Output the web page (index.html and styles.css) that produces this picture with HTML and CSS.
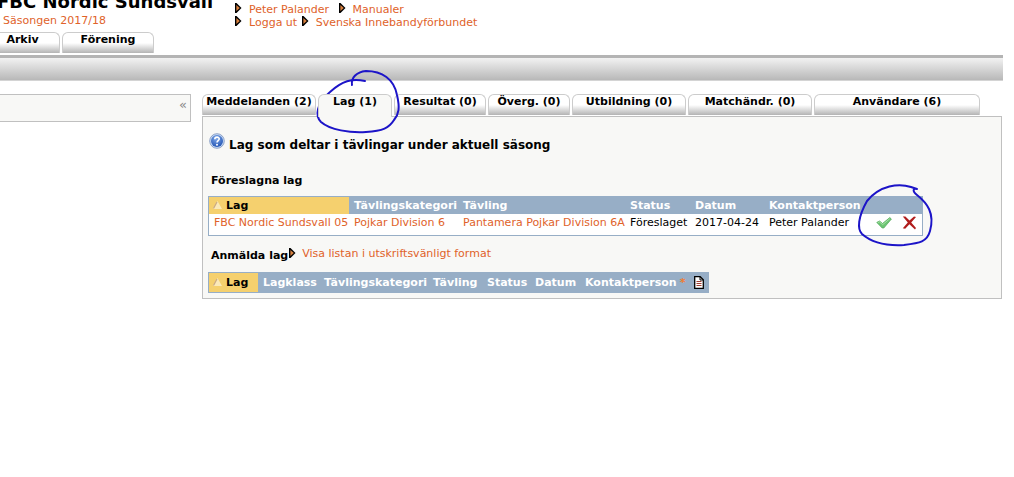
FILE: index.html
```html
<!DOCTYPE html>
<html lang="sv">
<head>
  <meta charset="UTF-8">
  <title>FBC Nordic Sundsvall</title>
  <link rel="stylesheet" href="styles.css">
</head>
<body>

  <svg class="symbols" width="0" height="0" aria-hidden="true">
    <symbol id="arrow" viewBox="0 0 7 10">
      <path d="M0 0 H1.5 L6.5 5 L1.5 10 H0 Z" fill="#000"/>
      <path d="M1.4 2 L4.8 5 L1.4 8 Z" fill="#d8803f"/>
    </symbol>
    <symbol id="sort" viewBox="0 0 9 8">
      <path d="M4.5 0 L9 8 H0 Z" fill="#fbe9b8"/>
      <path d="M4 1 L.5 7.5" stroke="#c9a886" stroke-width="1.2"/>
    </symbol>
  </svg>

  <header class="header">
    <div class="club">
      <h1>FBC Nordic Sundsvall</h1>
      <a href="#">Säsongen 2017/18</a>
    </div>
    <nav class="links">
      <div>
        <svg class="arrow"><use href="#arrow"/></svg><a href="#">Peter Palander</a>
        <svg class="arrow wide"><use href="#arrow"/></svg><a href="#">Manualer</a>
      </div>
      <div>
        <svg class="arrow"><use href="#arrow"/></svg><a href="#">Logga ut</a>
        <svg class="arrow"><use href="#arrow"/></svg><a href="#">Svenska Innebandyförbundet</a>
      </div>
    </nav>
  </header>

  <nav class="menu">
    <a class="tab tab-arkiv" href="#">Arkiv</a>
    <a class="tab tab-forening" href="#">Förening</a>
  </nav>
  <div class="bar"></div>

  <div class="page">
    <aside class="sidebar"><a href="#">«</a></aside>

    <main class="main">
      <nav class="tabs">
        <a class="tab tab-meddelanden" href="#">Meddelanden (2)</a>
        <a class="tab tab-lag active" href="#">Lag (1)</a>
        <a class="tab tab-resultat" href="#">Resultat (0)</a>
        <a class="tab tab-overg" href="#">Överg. (0)</a>
        <a class="tab tab-utbildning" href="#">Utbildning (0)</a>
        <a class="tab tab-match" href="#">Matchändr. (0)</a>
        <a class="tab tab-anvandare" href="#">Användare (6)</a>
      </nav>

      <section class="panel">
        <div class="heading">
          <svg class="help" viewBox="0 0 16 16">
            <defs>
              <radialGradient id="blue" cx=".45" cy=".3" r=".7">
                <stop offset="0" stop-color="#7fa9ea"/>
                <stop offset="1" stop-color="#2556b4"/>
              </radialGradient>
            </defs>
            <circle cx="8" cy="8" r="7.3" fill="#c9dcf5" stroke="#7890bd" stroke-width=".8"/>
            <circle cx="8" cy="8" r="6" fill="url(#blue)"/>
            <path d="M5.8 6.2 C5.8 3.4 10.3 3.5 10.2 6 C10.1 7.5 8 7.6 8 9.4" fill="none" stroke="#fff" stroke-width="1.6"/>
            <circle cx="8" cy="11.7" r="1" fill="#fff"/>
          </svg>
          <h2>Lag som deltar i tävlingar under aktuell säsong</h2>
        </div>

        <h3>Föreslagna lag</h3>
        <table class="list proposed">
          <colgroup>
            <col class="c-lag"><col class="c-kategori"><col class="c-tavling"><col class="c-status"><col class="c-datum"><col class="c-kontakt"><col class="c-action">
          </colgroup>
          <thead>
            <tr>
              <th class="sorted"><svg class="sort"><use href="#sort"/></svg>Lag</th>
              <th>Tävlingskategori</th>
              <th>Tävling</th>
              <th>Status</th>
              <th>Datum</th>
              <th>Kontaktperson</th>
              <th></th>
            </tr>
          </thead>
          <tbody>
            <tr>
              <td><a href="#">FBC Nordic Sundsvall 05</a></td>
              <td><a href="#">Pojkar Division 6</a></td>
              <td><a href="#">Pantamera Pojkar Division 6A</a></td>
              <td>Föreslaget</td>
              <td>2017-04-24</td>
              <td>Peter Palander</td>
              <td>
                <div class="actions">
                  <button type="button" aria-label="Godkänn">
                    <svg width="16" height="14" viewBox="0 0 16 14">
                      <path d="M.8 6.4 L3.5 5 L6.5 7.5 L13.8 1.6 L15.4 3 L7.8 12 H6.2 Z" fill="#6cc573" stroke="#58ad60" stroke-width=".8"/>
                      <path d="M2 6.5 L3.5 5.9 L6.7 8.6 L13.8 2.7" fill="none" stroke="#a8e2a6"/>
                    </svg>
                  </button>
                  <button type="button" aria-label="Ta bort">
                    <svg width="15" height="14" viewBox="0 0 15 14">
                      <path d="M.8 .6 H3.4 L7.5 4.6 L12 .4 L14 1 L9.2 6.4 L14 12 L13 13.5 L7.4 8.2 L3.2 12.8 L.8 12.2 L5.8 6.4 Z" fill="#b01c1c"/>
                    </svg>
                  </button>
                </div>
              </td>
            </tr>
          </tbody>
        </table>

        <div class="registered-head">
          <h3>Anmälda lag</h3>
          <svg class="arrow"><use href="#arrow"/></svg>
          <a href="#">Visa listan i utskriftsvänligt format</a>
        </div>
        <table class="list registered">
          <colgroup>
            <col class="r-lag"><col class="r-klass"><col class="c-kategori"><col class="r-tavling"><col class="r-status"><col class="r-datum"><col class="r-kontakt">
          </colgroup>
          <thead>
            <tr>
              <th class="sorted"><svg class="sort"><use href="#sort"/></svg>Lag</th>
              <th>Lagklass</th>
              <th>Tävlingskategori</th>
              <th>Tävling</th>
              <th>Status</th>
              <th>Datum</th>
              <th>
                <div class="contact">
                  <span>Kontaktperson</span>
                  <span class="star">*</span>
                  <svg class="document" viewBox="0 0 10 13">
                    <path d="M.7 .7 H6.2 L9.3 3.8 V12.3 H.7 Z" fill="#fff" stroke="#000" stroke-width="1.3"/>
                    <path d="M6 1 V4 H9" fill="none" stroke="#000"/>
                    <path d="M2.5 5.5 H7.5 M2.5 7.5 H7.5 M2.5 9.5 H7.5" stroke="#a03c30" stroke-width="1.2"/>
                  </svg>
                </div>
              </th>
            </tr>
          </thead>
        </table>
      </section>
    </main>
  </div>

  <!-- pen marks drawn over the page -->
  <svg class="marks" width="1014" height="477" viewBox="0 0 1014 477" aria-hidden="true">
    <path d="M365 81 C352 78 342 81 330 92 C316 104 315 116 321 122 C330 130 350 133 366 132 C383 131 389 128 394 120 C399 114 400 108 397 95 C394 79 382 71 366 71 C356 72 351 78 352 85"/>
    <path d="M917 189 L911 187 C899 183 880 185 867 201 C858 217 857 229 862 234 C871 242 886 246 904 245 C920 243 927 242 930 231 C935 213 927 203 917 195 C912 191 913 188 917 189"/>
  </svg>

</body>
</html>
```
FILE: styles.css
```css
body {
  font-family: Verdana, "DejaVu Sans", sans-serif;
  font-size: 11px;
  line-height: 12px;
  margin: 0;
  color: #000;
  background-color: #fff;
  overflow: hidden;
}

a {
  color: #e0622a;
  text-decoration: none;
}

h1, h2, h3 {
  margin: 0;
  font-size: 11px;
  line-height: 16px;
}

.symbols {
  position: absolute;
}

.header {
  display: flex;
  height: 32px;
}

.club {
  width: 234px;
  white-space: nowrap;
}

/* the top of the club name is scrolled out of view */
.club h1 {
  margin: -8px 0 3px -3px;
  font-size: 18px;
  line-height: 20px;
}

.club a {
  margin-left: 3px;
}

.links {
  padding-top: 3px;
}

.arrow {
  width: 7px;
  height: 10px;
  margin: 0 7px 0 1px;
}

.links .wide {
  margin-left: 6px;
}

.menu, .tabs {
  display: flex;
}

.menu {
  gap: 2px;
  height: 23px;
}

.tab {
  box-sizing: border-box;
  height: 21px;
  padding-top: 1px;
  border: 1px solid #ccc;
  border-bottom: 0;
  border-radius: 6px 6px 0 0;
  background: linear-gradient(#fff 50%, #b4b4b4);
  color: #000;
  font-weight: bold;
  text-align: center;
  white-space: nowrap;
}

.tab-arkiv {
  width: 60px;
  padding-right: 14px;
  border-left: 0;
  border-top-left-radius: 0;
}

.tab-forening {
  width: 92px;
}

.bar {
  height: 22px;
  margin-right: 11px;
  border-top: 3px solid #b4b4b4;
  border-bottom: 1px solid #d4d4d4;
  background: linear-gradient(#f2f2f2, #b8b8b8);
}

.page {
  display: flex;
  align-items: flex-start;
  gap: 11px;
  margin: 13px 12px 0 0;
}

.sidebar {
  box-sizing: border-box;
  width: 191px;
  height: 28px;
  padding: 4px 3px;
  border: 1px solid #c0c0c0;
  border-left: 0;
  background-color: #f8f8f6;
  text-align: right;
}

.sidebar a {
  color: #888;
  font-size: 13px;
}

.main {
  flex: 1;
}

.tabs {
  gap: 2px;
}

.tab-meddelanden { width: 114px; }
.tab-lag { width: 74px; }
.tab-resultat { width: 92px; }
.tab-overg { width: 82px; }
.tab-utbildning { width: 114px; }
.tab-match { width: 124px; }
.tab-anvandare { width: 166px; }

/* the open tab runs down into the panel */
.tabs .active {
  height: 23px;
  margin-bottom: -1px;
  background: #f8f8f6;
  z-index: 1;
}

.panel {
  padding: 16px 5px 5px;
  border: 1px solid #c0c0c0;
  background-color: #f8f8f6;
}

.heading {
  display: flex;
  gap: 4px;
  padding-left: 1px;
}

.heading h2 {
  padding-top: 4px;
  font-size: 12px;
}

.help {
  width: 16px;
  height: 16px;
}

.panel h3 {
  padding-left: 3px;
}

.heading + h3 {
  margin: 20px 0 7px;
}

.list {
  table-layout: fixed;
  border-collapse: separate;
  border-spacing: 0;
  border: 1px solid #97aec6;
  background-color: #fff;
  white-space: nowrap;
}

.proposed { width: 715px; }
.registered { width: 501px; }

.c-lag { width: 140px; }
.c-kategori { width: 109px; }
.c-tavling { width: 167px; }
.c-status { width: 65px; }
.c-datum { width: 74px; }
.c-kontakt { width: 102px; }
.r-lag { width: 49px; }
.r-klass { width: 61px; }
.r-tavling { width: 54px; }
.r-status { width: 48px; }
.r-datum { width: 50px; }

.list th, .list td {
  height: 17px;
  padding: 0 5px;
  text-align: left;
}

.list td {
  height: 18px;
  padding-bottom: 3px;
}

.list th {
  background-color: #97aec6;
  color: #fff;
}

.list .sorted {
  padding-left: 4px;
  background-color: #f5d06e;
  color: #000;
}

.registered th {
  height: 19px;
}

.sort {
  width: 9px;
  height: 8px;
  margin-right: 4px;
}

.actions {
  display: flex;
  gap: 10px;
  padding-left: 5px;
}

.actions button {
  display: flex;
  padding: 0;
  border: 0;
  background: none;
}

.registered-head {
  display: flex;
  padding: 9px 0 8px;
}

.registered-head h3 {
  padding-top: 3px;
}

.registered-head .arrow {
  margin: 3px 6px 0 1px;
}

.registered-head a {
  padding-top: 3px;
}

.contact {
  display: flex;
  align-items: center;
  gap: 3px;
}

.document {
  flex: none;
  width: 10px;
  height: 13px;
}

.star {
  margin-right: 6px;
  color: #f07c32;
}

.marks {
  position: absolute;
  top: 0;
  left: 0;
  fill: none;
  stroke: #1c14c8;
  stroke-width: 2;
  stroke-linecap: round;
  pointer-events: none;
}
```
